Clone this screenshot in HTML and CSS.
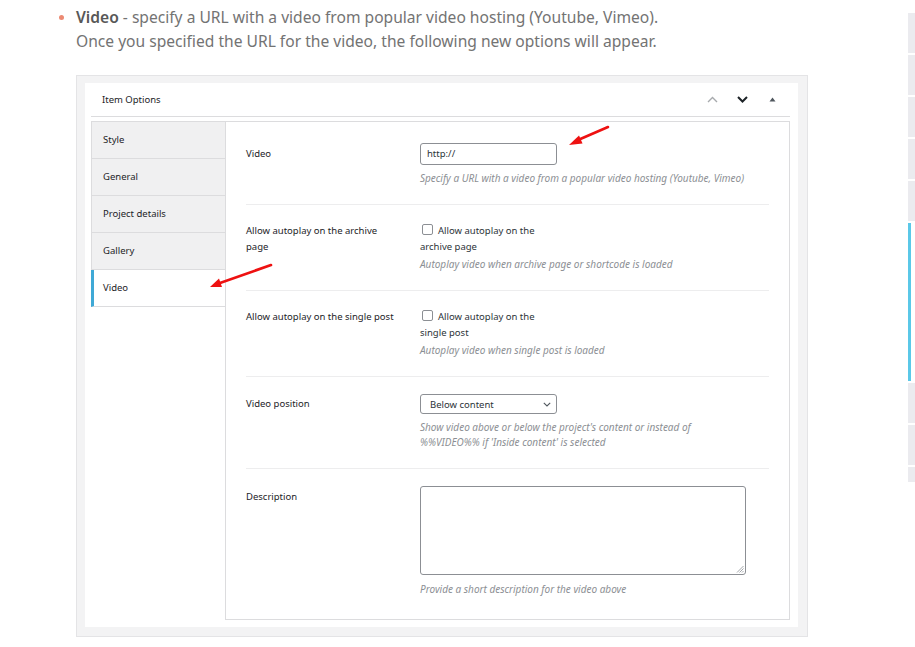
FILE: index.html
```html
<!DOCTYPE html>
<html lang="en">
<head>
    <meta charset="UTF-8">
    <title>Video options</title>
    <link rel="stylesheet" href="styles.css">
</head>
<body>

<div class="page">
    <ul class="intro">
        <li><strong>Video</strong> - specify a URL with a video from popular video hosting (Youtube, Vimeo).<br>Once you specified the URL for the video, the following new options will appear.</li>
    </ul>

    <div class="metabox">
        <div class="metabox-inner">
            <div class="metabox-head">
                <span>Item Options</span>
                <div class="head-btns">
                    <span class="head-btn">
                        <svg width="11" height="7" viewBox="0 0 11 7"><path d="M1 6 L5.5 1.5 L10 6" fill="none" stroke="#a7aaad" stroke-width="1.4"/></svg>
                    </span>
                    <span class="head-btn">
                        <svg width="11" height="7" viewBox="0 0 11 7"><path d="M1 1 L5.5 5.5 L10 1" fill="none" stroke="#1d2327" stroke-width="2"/></svg>
                    </span>
                    <span class="head-btn">
                        <svg width="7" height="5" viewBox="0 0 7 5"><path d="M0.5 4.5 L3.5 0.5 L6.5 4.5 Z" fill="#50575e"/></svg>
                    </span>
                </div>
            </div>

            <div class="metabox-body">
                <ul class="tabs">
                    <li>Style</li>
                    <li>General</li>
                    <li>Project details</li>
                    <li>Gallery</li>
                    <li class="active">Video</li>
                </ul>

                <div class="fields">
                    <div class="field field-url">
                        <div class="field-label with-input">Video</div>
                        <div class="field-control">
                            <div class="text-input">http://</div>
                            <p class="desc">Specify a URL with a video from a popular video hosting (Youtube, Vimeo)</p>
                        </div>
                    </div>

                    <div class="field">
                        <div class="field-label">Allow autoplay on the archive page</div>
                        <div class="field-control">
                            <label class="check"><span class="box"></span>Allow autoplay on the archive page</label>
                            <p class="desc tight">Autoplay video when archive page or shortcode is loaded</p>
                        </div>
                    </div>

                    <div class="field">
                        <div class="field-label">Allow autoplay on the single post</div>
                        <div class="field-control">
                            <label class="check"><span class="box"></span>Allow autoplay on the single post</label>
                            <p class="desc tight">Autoplay video when single post is loaded</p>
                        </div>
                    </div>

                    <div class="field field-select">
                        <div class="field-label with-select">Video position</div>
                        <div class="field-control">
                            <div class="select">
                                <span>Below content</span>
                                <svg width="8" height="5" viewBox="0 0 8 5"><path d="M0.8 0.8 L4 4 L7.2 0.8" fill="none" stroke="#50575e" stroke-width="1.1"/></svg>
                            </div>
                            <p class="desc narrow">Show video above or below the project's content or instead of %%VIDEO%% if 'Inside content' is selected</p>
                        </div>
                    </div>

                    <div class="field field-desc">
                        <div class="field-label with-textarea">Description</div>
                        <div class="field-control">
                            <div class="textarea">
                                <svg class="grip" width="8" height="8" viewBox="0 0 8 8"><path d="M7.5 1 L1 7.5 M7.5 3.5 L3.5 7.5 M7.5 6 L6 7.5" stroke="#8c8f94" stroke-width="0.8"/></svg>
                            </div>
                            <p class="desc">Provide a short description for the video above</p>
                        </div>
                    </div>
                </div>
            </div>
        </div>
    </div>

    <!-- red annotation arrows drawn over the screenshot -->
    <svg class="arrows" width="915" height="647" viewBox="0 0 915 647">
        <line x1="608" y1="127" x2="578" y2="140" stroke="#ee1111" stroke-width="2.6" stroke-linecap="round"/>
        <path d="M569 145 L579 135.5 L582.5 143.5 Z" fill="#ee1111"/>
        <line x1="271" y1="265" x2="220" y2="283" stroke="#ee1111" stroke-width="2.6" stroke-linecap="round"/>
        <path d="M210 287 L219 278.5 L222 287 Z" fill="#ee1111"/>
    </svg>

    <div class="scroll-strip">
        <span class="mark"></span>
        <span class="mark"></span>
        <span class="mark"></span>
        <span class="mark"></span>
        <span class="mark"></span>
        <span class="mark current"></span>
        <span class="mark"></span>
        <span class="mark"></span>
        <span class="mark short"></span>
    </div>
</div>

</body>
</html>
```

FILE: styles.css
```css
* {
    box-sizing: border-box;
}

body {
    margin: 0;
    background: #ffffff;
    font-family: 'Noto Sans', sans-serif;
}

.page {
    position: relative;
    width: 915px;
    height: 647px;
    overflow: hidden;
}

.intro {
    margin: 0;
    padding: 5px 0 0 76px;
    list-style: none;
    font-size: 15.6px;
    line-height: 24px;
    color: #737373;
}
.intro li {
    position: relative;
}
.intro li::before {
    content: "";
    position: absolute;
    left: -17px;
    top: 10px;
    width: 5px;
    height: 5px;
    border-radius: 50%;
    background: #ec8a73;
}
.intro strong {
    color: #585858;
    font-weight: 600;
}

.metabox {
    margin: 22px 0 0 76px;
    width: 732px;
    height: 562px;
    border: 1px solid #e4e4e6;
    background: #f3f3f4;
    padding: 7px 9px 9px 8px;
}
.metabox-inner {
    display: flex;
    flex-direction: column;
    height: 100%;
    background: #ffffff;
    padding: 0 8px 7px 6px;
}
.metabox-head {
    display: flex;
    align-items: center;
    justify-content: space-between;
    height: 34px;
    padding: 0 3px 0 11px;
    border-bottom: 1px solid #dcdcde;
    font-size: 9.5px;
    color: #1d2327;
}
.head-btns {
    display: flex;
}
.head-btn {
    display: flex;
    align-items: center;
    justify-content: center;
    width: 30px;
    height: 30px;
}

.metabox-body {
    display: flex;
    flex: 1;
    margin-top: 4px;
}

.tabs {
    width: 134px;
    margin: 0;
    padding: 0;
    list-style: none;
    align-self: flex-start;
    border-top: 1px solid #dcdcde;
}
.tabs li {
    height: 37px;
    line-height: 36px;
    padding-left: 11px;
    font-size: 9.5px;
    color: #1d2327;
    background: #f0f0f1;
    border-left: 1px solid #dcdcde;
    border-bottom: 1px solid #dcdcde;
}
.tabs li.active {
    background: #ffffff;
    border-left: 3px solid #3fa9d6;
    padding-left: 9px;
}

.fields {
    flex: 1;
    border: 1px solid #dcdcde;
    padding: 0 20px;
}
.field {
    display: flex;
    padding: 18px 0 19px;
    border-bottom: 1px solid #ededee;
}
.field-url {
    padding: 21px 0 19px;
}
.field-select {
    padding: 17px 0 18px;
}
.field-desc {
    padding: 17px 0 0;
    border-bottom: none;
}
.field-label {
    width: 174px;
    padding-right: 22px;
    font-size: 9.5px;
    line-height: 16px;
    color: #1d2327;
}
.field-label.with-input {
    padding-top: 3px;
}
.field-label.with-select {
    padding-top: 2px;
}
.field-label.with-textarea {
    padding-top: 3px;
}
.field-control {
    flex: 1;
}

.text-input {
    width: 137px;
    height: 22px;
    border: 1px solid #8c8f94;
    border-radius: 3px;
    padding-left: 6px;
    font-size: 9.5px;
    line-height: 20px;
    color: #2c3338;
}

.check {
    display: block;
    width: 128px;
    font-size: 9.5px;
    line-height: 16px;
    color: #2c3338;
}
.check .box {
    display: inline-block;
    width: 11px;
    height: 11px;
    margin: 0 5px 0 2px;
    vertical-align: -1px;
    border: 1px solid #8c8f94;
    border-radius: 2px;
    background: #fff;
}

.select {
    display: flex;
    align-items: center;
    justify-content: space-between;
    width: 137px;
    height: 20px;
    padding: 0 5px 0 9px;
    border: 1px solid #8c8f94;
    border-radius: 3px;
    font-size: 9.5px;
    color: #2c3338;
}

.textarea {
    position: relative;
    width: 326px;
    height: 89px;
    border: 1px solid #8c8f94;
    border-radius: 3px;
}
.textarea .grip {
    position: absolute;
    right: 1px;
    bottom: 1px;
}

.desc {
    margin: 6px 0 0;
    font-size: 10px;
    line-height: 14px;
    font-style: italic;
    color: #8c8f94;
}
.desc.tight {
    margin-top: 2px;
}
.desc.narrow {
    width: 285px;
    line-height: 15px;
}
.field-desc .desc {
    margin-top: 7px;
}

.arrows {
    position: absolute;
    left: 0;
    top: 0;
    pointer-events: none;
}

.scroll-strip {
    position: absolute;
    top: 13px;
    right: 0;
    width: 7px;
    display: flex;
    flex-direction: column;
    gap: 2px;
}
.scroll-strip .mark {
    display: block;
    height: 40px;
    background: #ebebef;
}
.scroll-strip .mark.current {
    height: 158px;
    background: linear-gradient(to right, #5bc8e8 3px, transparent 3px);
}
.scroll-strip .mark.short {
    height: 15px;
}
```
